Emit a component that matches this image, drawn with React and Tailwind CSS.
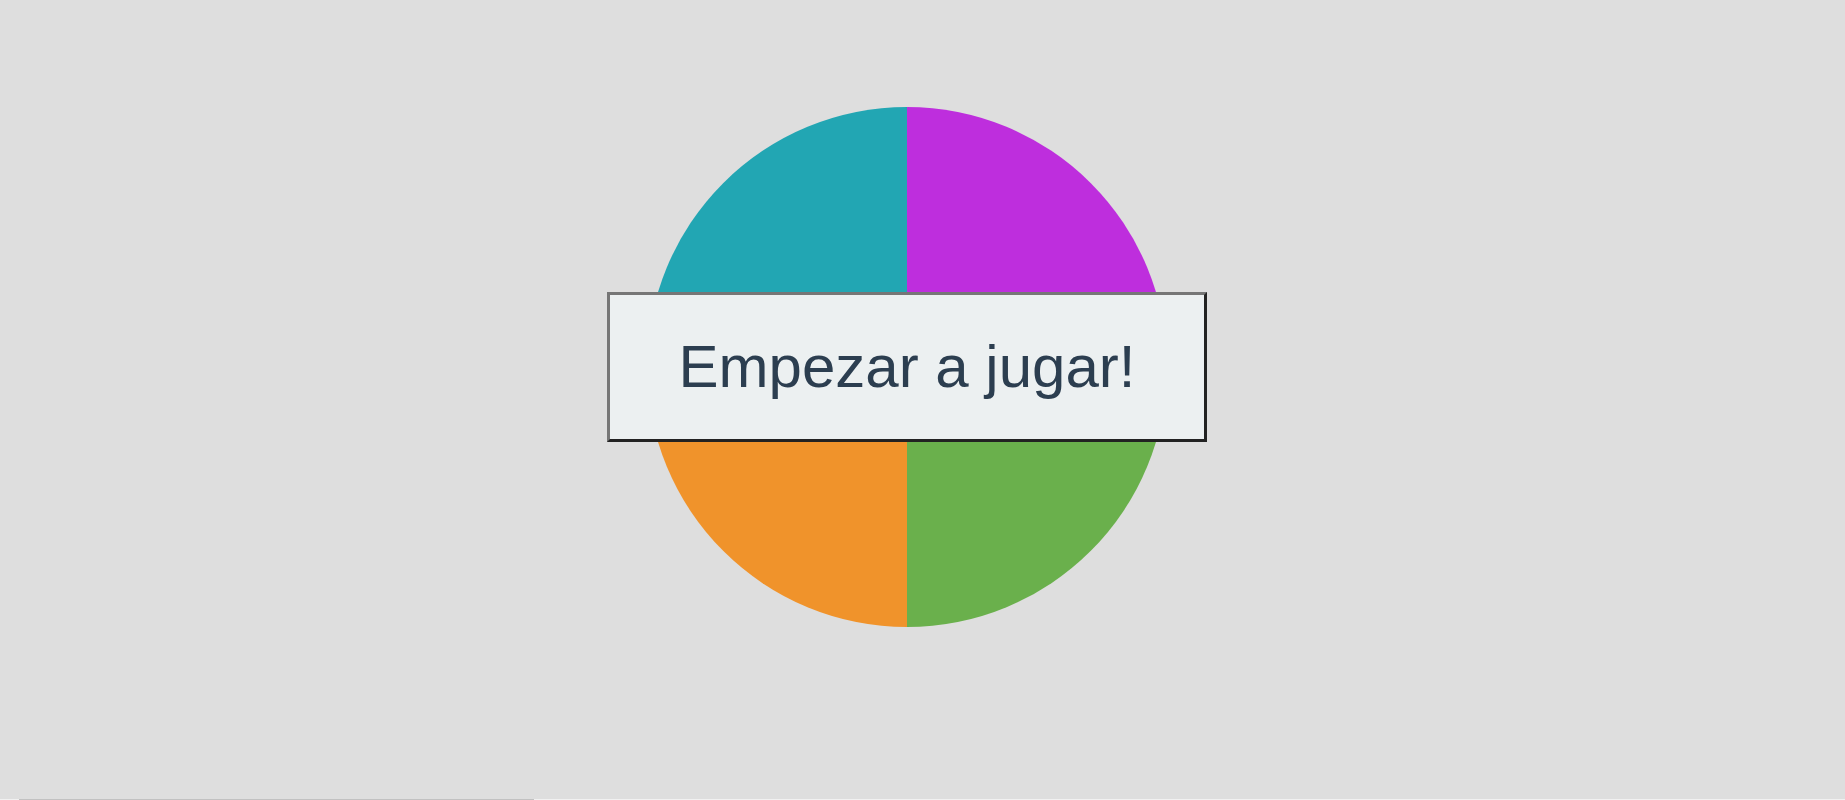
export default function App() {
  return (
    <div className="w-[1845px] h-[800px] bg-[#dedede] flex flex-col overflow-hidden" style={{ fontFamily: '"Liberation Sans", Arial, sans-serif' }}>
      <div className="h-[799px] pt-[107px] pl-[647px]">
        <div className="relative w-[520px] h-[520px]">
          <div className="w-[520px] h-[520px] rounded-full overflow-hidden grid grid-cols-2 grid-rows-2">
            <div className="bg-[#22a6b3]" />
            <div className="bg-[#be2edd]" />
            <div className="bg-[#f0932b]" />
            <div className="bg-[#6ab04c]" />
          </div>
          <button className="absolute left-[-40px] top-[185px] w-[600px] h-[150px] bg-[#ecf0f1] border-[3px] border-t-[#767676] border-l-[#767676] border-r-[#222222] border-b-[#222222] text-[#2c3e50] text-[60px] leading-none flex items-center justify-center">
            Empezar a jugar!
          </button>
        </div>
      </div>
      <div className="h-[1px] bg-[#f1f1f1] flex">
        <div className="ml-[19px] w-[515px] bg-[#c1c1c1]" />
      </div>
    </div>
  );
}
